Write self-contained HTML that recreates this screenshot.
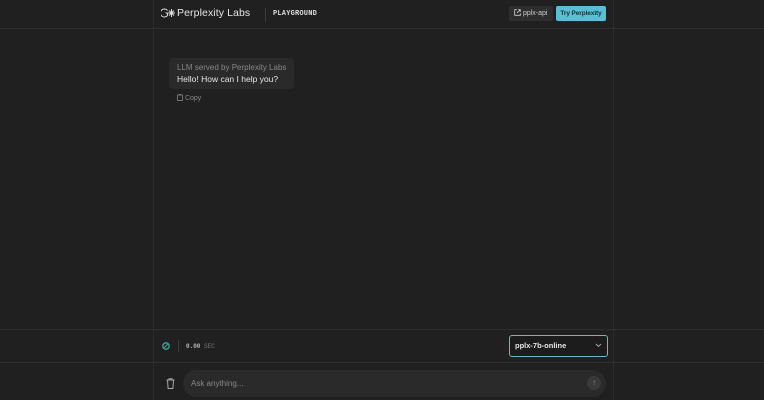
<!DOCTYPE html>
<html><head><meta charset="utf-8"><style>
*{margin:0;padding:0;box-sizing:border-box}
body{width:764px;height:400px;background:#202020;font-family:"Liberation Sans",sans-serif;position:relative;overflow:hidden;color:#ddd}
.hl{position:absolute;left:0;width:764px;height:1px;background:#2e2e2e}
.vl{position:absolute;top:0;width:1px;height:400px;background:#2c2c2c}
.abs{position:absolute;white-space:nowrap}
</style></head><body>
<div class="hl" style="top:28px"></div>
<div class="hl" style="top:329px"></div>
<div class="hl" style="top:362px"></div>
<div class="vl" style="left:153px"></div>
<div class="vl" style="left:613px"></div>

<svg class="abs" style="left:161px;top:8px" width="14" height="10" viewBox="0 0 14 10" fill="none" stroke="#ddd" stroke-width="1"><path d="M6.5 2.5A4 4 0 1 0 6.5 7.5V5H4.5"/><path d="M10.5 1v8M7 5h7M8 2.5l5 5M13 2.5l-5 5"/></svg>
<div class="abs" style="left:177px;top:7px;font-size:10.5px;color:#e6e6e6;letter-spacing:0.1px">Perplexity Labs</div>
<div class="abs" style="left:265px;top:8px;width:1px;height:14px;background:#3a3a3a"></div>
<div class="abs" style="left:273px;top:10px;font-family:'Liberation Mono',monospace;font-size:7px;font-weight:bold;color:#ddd;letter-spacing:0.2px">PLAYGROUND</div>

<div class="abs" style="left:509px;top:6px;width:44px;height:15px;background:#2e2e2e;border-radius:2px;font-size:7px;color:#ccc;line-height:15px;padding-left:5px">
<svg width="7" height="7" viewBox="0 0 10 10" style="vertical-align:-1px" fill="none" stroke="#ccc" stroke-width="1.2"><path d="M4 1H1v8h8V6M6 1h3v3M9 1L4.5 5.5"/></svg> pplx-api</div>
<div class="abs" style="left:556px;top:6px;width:50px;height:15px;background:#5bbfd3;border-radius:2px;font-size:6.5px;color:#0e3540;line-height:15px;text-align:center;font-weight:bold;letter-spacing:-0.1px">Try Perplexity</div>

<div class="abs" style="left:169px;top:58px;width:125px;height:31px;background:#2a2a2a;border-radius:4px"></div>
<div class="abs" style="left:177px;top:63px;font-size:8px;color:#888">LLM served by Perplexity Labs</div>
<div class="abs" style="left:177px;top:74px;font-size:8.5px;color:#e6e6e6">Hello! How can I help you?</div>
<div class="abs" style="left:177px;top:94px;font-size:7px;color:#888">
<svg width="6" height="7" viewBox="0 0 6 7" fill="none" stroke="#888" stroke-width="0.8" style="vertical-align:-1px"><rect x="0.5" y="1" width="5" height="5.5"/><path d="M2 0.5h2"/></svg> Copy</div>

<svg class="abs" style="left:162px;top:342px" width="8" height="8" viewBox="0 0 10 10"><circle cx="5" cy="5" r="4" fill="none" stroke="#3aa89a" stroke-width="1.6"/><path d="M2 8L8 2" stroke="#3aa89a" stroke-width="1.2"/></svg>
<div class="abs" style="left:178px;top:340px;width:1px;height:12px;background:#3a3a3a"></div>
<div class="abs" style="left:186px;top:343px;font-family:'Liberation Mono',monospace;font-size:6px;color:#bbb"><b>0.00</b> <span style="color:#777">SEC</span></div>

<div class="abs" style="left:509px;top:335px;width:99px;height:22px;border:1px solid #6ab8c4;border-radius:3px;background:#1c1c1c"></div>
<div class="abs" style="left:515px;top:341px;font-size:7.5px;font-weight:bold;color:#e6e6e6">pplx-7b-online</div>
<svg class="abs" style="left:595px;top:343px" width="7" height="5" viewBox="0 0 7 5"><path d="M1 1l2.5 2.5L6 1" fill="none" stroke="#aaa" stroke-width="0.9"/></svg>

<svg class="abs" style="left:166px;top:378px" width="9" height="11" viewBox="0 0 9 11" fill="none" stroke="#aaa" stroke-width="1"><path d="M0.5 2h8M3 2V0.8h3V2M1.5 2l0.6 8.5h4.8L7.5 2"/></svg>
<div class="abs" style="left:183px;top:370px;width:423px;height:27px;background:#2a2a2a;border-radius:14px"></div>
<div class="abs" style="left:191px;top:379px;font-size:8px;color:#888">Ask anything...</div>
<div class="abs" style="left:587px;top:376px;width:14px;height:14px;border-radius:7px;background:#3a3a3a;color:#888;font-size:8px;text-align:center;line-height:14px">↑</div>
</body></html>
